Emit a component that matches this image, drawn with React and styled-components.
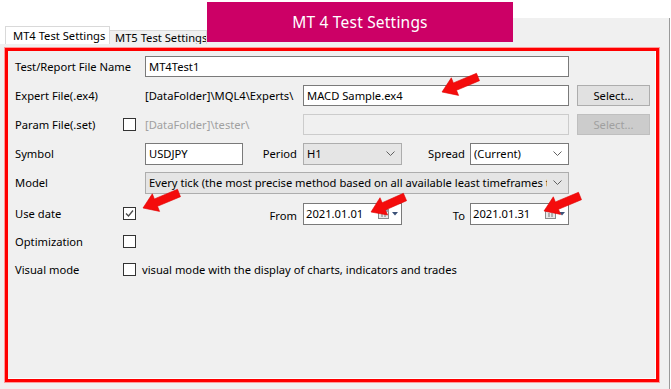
import React from 'react';
import styled, {createGlobalStyle} from "styled-components";

const GlobalStyle = createGlobalStyle`
html, body {
  margin: 0;
  padding: 0;
  background: #fff;
}
body {
  font-family: "Noto Sans", "DejaVu Sans", sans-serif;
  font-size: 11.2px;
  color: #000;
}
`

// arrow polygon from tail to tip, computed at render
const arrowPoints = ([tx, ty], [hx, hy], shaft = 8, headW = 19, headL = 14) => {
    const dx = hx - tx, dy = hy - ty
    const len = Math.hypot(dx, dy)
    const ux = dx / len, uy = dy / len
    const px = -uy, py = ux
    const bx = hx - ux * headL, by = hy - uy * headL
    const s = shaft / 2, h = headW / 2
    return [
        [tx + px * s, ty + py * s],
        [bx + px * s, by + py * s],
        [bx + px * h, by + py * h],
        [hx, hy],
        [bx - px * h, by - py * h],
        [bx - px * s, by - py * s],
        [tx - px * s, ty - py * s],
    ].map(p => p.map(v => v.toFixed(1)).join(',')).join(' ')
}

const arrows = [
    {tail: [478, 77], tip: [442, 92]},
    {tail: [179, 193], tip: [143, 208]},
    {tail: [405, 197], tip: [371, 212]},
    {tail: [580, 196], tip: [544, 211]},
]

const Chevron = () => (
    <svg width="9" height="5" viewBox="0 0 9 5">
        <polyline points="0.5,0.5 4.5,4.5 8.5,0.5" fill="none" stroke="#606060" strokeWidth="1"/>
    </svg>
)

const Check = () => (
    <svg width="11" height="11" viewBox="0 0 11 11">
        <polyline points="2,5.5 4.5,8 9,2.5" fill="none" stroke="#4a4a4a" strokeWidth="1.3"/>
    </svg>
)

const CalendarIcon = () => (
    <svg width="22" height="12" viewBox="0 0 22 12">
        <rect x="1.5" y="1.5" width="10" height="9" fill="#e8e8e8" stroke="#8a8a8a"/>
        <rect x="1.5" y="1.5" width="10" height="2.5" fill="#9aa3b0"/>
        <path d="M4 6h2M7 6h2M4 8h2M7 8h2" stroke="#777" strokeWidth="1"/>
        <polygon points="15,4 21,4 18,7.5" fill="#3b5178"/>
    </svg>
)

const Field = ({label, children}) => (
    <>
        <Label>{label}</Label>
        {children}
    </>
)

const App = () => {
    return (
        <Page>
            <GlobalStyle/>
            <TabRow>
                <Tab active>MT4 Test Settings</Tab>
                <Tab>MT5 Test Settings</Tab>
                <TabFiller/>
            </TabRow>
            <Panel>
                <Frame>
                    <Form>
                        <Field label="Test/Report File Name">
                            <TextBox col="3 / span 5">MT4Test1</TextBox>
                        </Field>

                        <Field label="Expert File(.ex4)">
                            <PathText col="3 / span 2">[DataFolder]\MQL4\Experts\</PathText>
                            <TextBox col="5 / span 3">MACD Sample.ex4</TextBox>
                            <Button col="9">Select...</Button>
                        </Field>

                        <Field label="Param File(.set)">
                            <CheckBox/>
                            <PathText col="3 / span 2" disabled>[DataFolder]\tester\</PathText>
                            <TextBox col="5 / span 3" disabled/>
                            <Button col="9" disabled>Select...</Button>
                        </Field>

                        <Field label="Symbol">
                            <TextBox col="3" tall>USDJPY</TextBox>
                            <SideLabel col="4">Period</SideLabel>
                            <Select col="5" flat><SelectText>H1</SelectText><Chevron/></Select>
                            <SideLabel col="6">Spread</SideLabel>
                            <Select col="7"><SelectText>(Current)</SelectText><Chevron/></Select>
                        </Field>

                        <Field label="Model">
                            <Select col="3 / span 5" flat>
                                <SelectText>Every tick (the most precise method based on all available least timeframes to generate each tick)</SelectText>
                                <Chevron/>
                            </Select>
                        </Field>

                        <Field label="Use date">
                            <CheckBox><Check/></CheckBox>
                            <SideLabel col="4" low>From</SideLabel>
                            <DateBox col="5"><span>2021.01.01</span><CalendarIcon/></DateBox>
                            <SideLabel col="6" low>To</SideLabel>
                            <DateBox col="7"><span>2021.01.31</span><CalendarIcon/></DateBox>
                        </Field>

                        <Field label="Optimization">
                            <CheckBox/>
                        </Field>

                        <Field label="Visual mode">
                            <CheckLine>
                                <CheckBox/>
                                <span>visual mode with the display of charts, indicators and trades</span>
                            </CheckLine>
                        </Field>
                    </Form>
                </Frame>
            </Panel>

            <Banner>MT 4 Test Settings</Banner>

            <Overlay width="671" height="389" viewBox="0 0 671 389">
                {arrows.map((a, i) => (
                    <polygon key={i} points={arrowPoints(a.tail, a.tip)} fill="#f40c0c" stroke="#e00000" strokeWidth="0.6"/>
                ))}
            </Overlay>
        </Page>
    );
};

//-----------Window---------
const Page = styled.div`
position: relative;
width: 670px;
height: 389px;
display: flex;
flex-direction: column;
overflow: hidden;
`
const TabRow = styled.div`
display: flex;
align-items: flex-end;
height: 26px;
margin-top: 18px;
padding-left: 5px;
`
const Tab = styled.div`
box-sizing: border-box;
width: ${p => p.active ? 105 : 98}px;
height: ${p => p.active ? 18 : 14}px;
padding-left: ${p => p.active ? 7 : 5}px;
line-height: ${p => p.active ? 17 : 14}px;
background: ${p => p.active ? '#fff' : '#f0f0f0'};
border: 1px solid #d9d9d9;
border-bottom: none;
margin-left: ${p => p.active ? 0 : -1}px;
white-space: nowrap;
overflow: hidden;
`
const TabFiller = styled.div`
flex: 1;
align-self: stretch;
background: #f0f0f0;
border-right: 1px solid #9a9a9a;
`
const Panel = styled.div`
flex: 1;
background: #f0f0f0;
border-right: 1px solid #9a9a9a;
padding: 4px 0 0 5px;
`
const Frame = styled.div`
box-sizing: border-box;
width: 654px;
height: 334px;
border: 3px solid #ff0000;
box-shadow: 0 0 0 1px #ff9a9a, inset -2px -2px 0 -1px #fdfdfd;
`

//-----------Form---------
const Form = styled.div`
display: grid;
grid-template-columns: 108px 22px 98px 60px 99px 68px 99px 8px 73px;
grid-template-rows: 29px 29px 29px 29px 29px 33px 22px 34px;
align-items: center;
padding: 1px 0 0 7px;
`
const Label = styled.div`
grid-column: 1;
white-space: nowrap;
`
const SideLabel = styled.div`
grid-column: ${p => p.col};
text-align: right;
padding-right: ${p => p.col === "4" ? 6 : 5}px;
margin-top: ${p => p.low ? 3 : 0}px;
`
const PathText = styled.div`
grid-column: ${p => p.col};
white-space: nowrap;
color: ${p => p.disabled ? '#a0a0a0' : '#000'};
`
const TextBox = styled.div`
grid-column: ${p => p.col};
box-sizing: border-box;
height: ${p => p.tall ? 22 : 21}px;
line-height: ${p => p.tall ? 20 : 19}px;
padding-left: 3px;
background: ${p => p.disabled ? '#f0f0f0' : '#fff'};
border: 1px solid ${p => p.disabled ? '#cccccc' : '#7a7a7a'};
white-space: nowrap;
overflow: hidden;
`
const Button = styled.div`
grid-column: ${p => p.col};
box-sizing: border-box;
height: 21px;
line-height: 19px;
text-align: center;
background: ${p => p.disabled ? '#cccccc' : '#e1e1e1'};
border: 1px solid ${p => p.disabled ? '#bfbfbf' : '#adadad'};
color: ${p => p.disabled ? '#a0a0a0' : '#000'};
`
const Select = styled.div`
grid-column: ${p => p.col};
box-sizing: border-box;
height: 22px;
display: flex;
align-items: center;
gap: 6px;
padding: 0 6px 0 3px;
background: ${p => p.flat ? '#e5e5e5' : '#fff'};
border: 1px solid ${p => p.flat ? '#adadad' : '#7a7a7a'};
svg {
    flex-shrink: 0;
}
`
const SelectText = styled.div`
flex: 1;
white-space: nowrap;
overflow: hidden;
`
const DateBox = styled.div`
grid-column: ${p => p.col};
box-sizing: border-box;
height: 22px;
display: flex;
align-items: center;
justify-content: space-between;
padding: 0 2px 0 2px;
background: #fff;
border: 1px solid #7a7a7a;
`
const CheckBox = styled.div`
grid-column: 2;
box-sizing: border-box;
width: 13px;
height: 13px;
display: flex;
align-items: center;
justify-content: center;
background: #fff;
border: 1px solid #333;
`
const CheckLine = styled.div`
grid-column: 2 / span 8;
display: flex;
align-items: center;
gap: 6px;
white-space: nowrap;
`

//-----------Annotations---------
const Banner = styled.div`
position: absolute;
left: 207px;
top: 2px;
width: 306px;
height: 40px;
display: flex;
align-items: center;
justify-content: center;
background: #cc0066;
color: #fff;
font-size: 15.5px;
letter-spacing: 0.2px;
`
const Overlay = styled.svg`
position: absolute;
left: 0;
top: 0;
pointer-events: none;
`

export default App;
